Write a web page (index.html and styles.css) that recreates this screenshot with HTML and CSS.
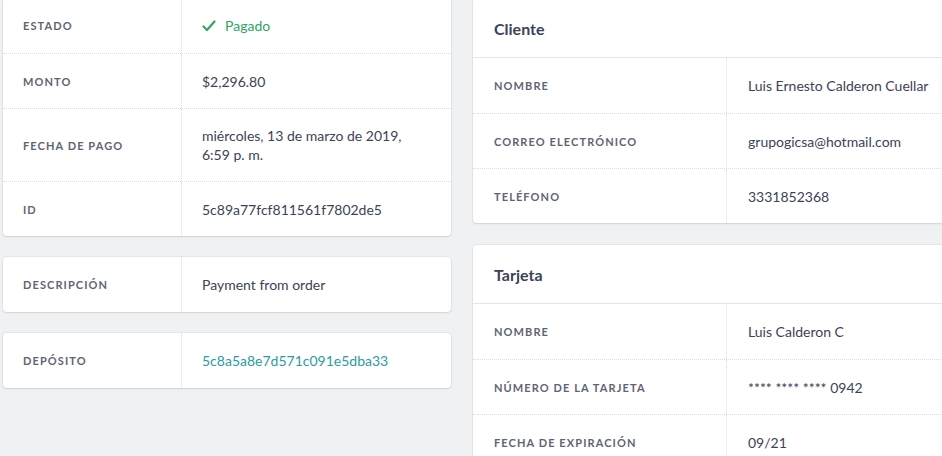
FILE: index.html
```html
<!DOCTYPE html>
<html lang="es">
<head>
<meta charset="utf-8">
<title>Pago</title>
<link rel="stylesheet" href="styles.css">
</head>
<body>
<div class="page">
  <div class="col col-left">
    <section class="card">
      <div class="row">
        <div class="label">Estado</div>
        <div class="value status">
          <svg class="check" width="14" height="12" viewBox="0 0 14 12"><path d="M1.5 6.5 L5 10 L12.5 1.5" fill="none" stroke="currentColor" stroke-width="2.2" stroke-linecap="round" stroke-linejoin="round"/></svg>
          <span>Pagado</span>
        </div>
      </div>
      <div class="row">
        <div class="label">Monto</div>
        <div class="value">$2,296.80</div>
      </div>
      <div class="row row-tall">
        <div class="label">Fecha de pago</div>
        <div class="value"><span>miércoles, 13 de marzo de 2019,<br>6:59 p. m.</span></div>
      </div>
      <div class="row">
        <div class="label">ID</div>
        <div class="value">5c89a77fcf811561f7802de5</div>
      </div>
    </section>
    <section class="card">
      <div class="row">
        <div class="label">Descripción</div>
        <div class="value">Payment from order</div>
      </div>
    </section>
    <section class="card">
      <div class="row">
        <div class="label">Depósito</div>
        <div class="value"><a class="link" href="#">5c8a5a8e7d571c091e5dba33</a></div>
      </div>
    </section>
  </div>
  <div class="col col-right">
    <section class="card card-wide">
      <header class="card-head">Cliente</header>
      <div class="row">
        <div class="label">Nombre</div>
        <div class="value">Luis Ernesto Calderon Cuellar</div>
      </div>
      <div class="row">
        <div class="label">Correo electrónico</div>
        <div class="value">grupogicsa@hotmail.com</div>
      </div>
      <div class="row">
        <div class="label">Teléfono</div>
        <div class="value">3331852368</div>
      </div>
    </section>
    <section class="card card-wide">
      <header class="card-head">Tarjeta</header>
      <div class="row">
        <div class="label">Nombre</div>
        <div class="value">Luis Calderon C</div>
      </div>
      <div class="row">
        <div class="label">Número de la tarjeta</div>
        <div class="value"><span>**** **** **** 0942</span></div>
      </div>
      <div class="row">
        <div class="label">Fecha de expiración</div>
        <div class="value">09/21</div>
      </div>
    </section>
  </div>
</div>
</body>
</html>
```
FILE: styles.css
```css
html, body {
  margin: 0;
  padding: 0;
  overflow: hidden;
  background: #f0f1f3;
}
body {
  font-family: Lato, "Open Sans", "Liberation Sans", sans-serif;
  color: #3c4257;
  width: 942px;
  height: 456px;
}
.page {
  display: flex;
  align-items: flex-start;
  gap: 22px;
  padding-left: 3px;
}
.col {
  display: flex;
  flex-direction: column;
  gap: 21px;
}
.col-left {
  width: 448px;
  flex: none;
  margin-top: -2px;
}
.col-right {
  width: 520px;
  flex: none;
  gap: 22px;
  margin-top: -1px;
}
.card {
  background: #fff;
  border-radius: 4px;
  box-shadow: 0 0 0 1px rgba(60, 66, 87, 0.05), 0 1px 2px rgba(60, 66, 87, 0.12);
  overflow: hidden;
}
.card-head {
  height: 59px;
  box-sizing: border-box;
  display: flex;
  align-items: center;
  padding-left: 21px;
  padding-top: 1px;
  font-size: 16px;
  font-weight: 700;
  color: #3c4257;
  border-bottom: 1px solid #e3e5e8;
}
.row {
  display: grid;
  grid-template-columns: 179px 1fr;
  height: 55px;
  box-sizing: border-box;
}
.card-wide .row {
  grid-template-columns: 254px 1fr;
}
.row + .row {
  border-top: 1px dotted #d9dce1;
}
.row-tall {
  height: 73px;
}
.label {
  display: flex;
  align-items: center;
  padding-left: 20px;
  font-size: 11px;
  font-weight: 700;
  letter-spacing: 1.1px;
  text-transform: uppercase;
  color: #5f6474;
  border-right: 1px dotted #d9dce1;
}
.card-wide .label {
  padding-left: 21px;
}
.value {
  display: flex;
  align-items: center;
  padding-left: 20px;
  font-size: 14px;
  line-height: 19px;
  color: #3c4257;
}
.card-wide .value {
  padding-left: 21px;
}
.status {
  color: #2ea663;
  gap: 9px;
}
.check {
  color: #2ea663;
}
.link {
  color: #2b9c9e;
  text-decoration: none;
}
```
